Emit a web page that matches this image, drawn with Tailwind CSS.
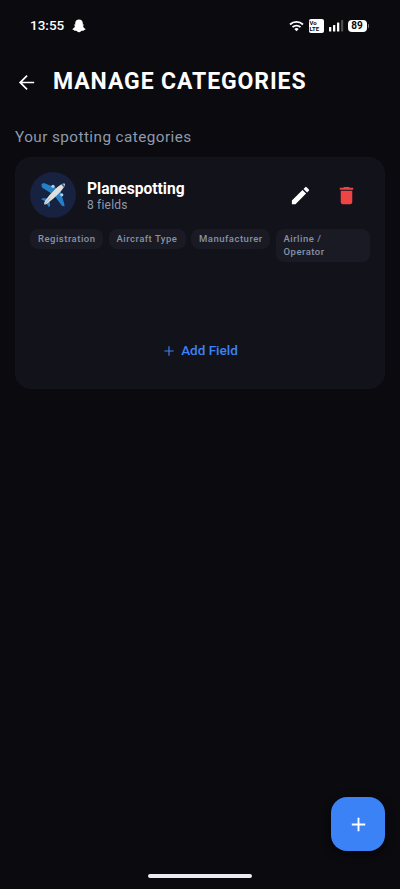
<!DOCTYPE html>
<html lang="en">
<head>
<meta charset="utf-8">
<meta name="viewport" content="width=device-width, initial-scale=1">
<title>Manage Categories</title>
<script src="https://cdn.jsdelivr.net/npm/@tailwindcss/browser@4"></script>
</head>
<body class="bg-[#0a0a0f] font-['Roboto',sans-serif] text-white">
<div class="relative flex h-[889px] w-[400px] flex-col overflow-hidden">
  <!-- Status bar -->
  <header class="flex h-[51px] shrink-0 items-center justify-between pl-[30px] pr-[30px]">
    <div class="flex items-center gap-[8px]">
      <span class="pb-[2px] text-[13.500px] font-medium leading-4">13:55</span>
      <svg class="h-[14px] w-[14px]" viewBox="0 0 14 14" fill="#fff"><path d="M7 .5C4.600.5 3.200 2.200 3.200 4.200v1.500l-1.200-.1c-.3.5.4.9 1 1.200C2.700 8.500 1.600 9.500.400 9.900c.1.800 1 .900 1.700 1.100l.4.900c.9-.1 1.900-.1 2.500.4.600.5 1.200.9 2 .9s1.400-.4 2-.9c.6-.5 1.600-.5 2.500-.4l.4-.9c.7-.2 1.600-.3 1.700-1.100C12.400 9.500 11.300 8.500 11 6.800c.6-.3 1.300-.7 1-1.200l-1.200.1V4.200C10.800 2.200 9.400.5 7 .5z"/></svg>
    </div>
    <div class="flex items-center">
      <svg class="h-[12px] w-[15px]" viewBox="0 0 15 12" fill="none" stroke="#fff" stroke-width="1.800"><path d="M1 4.500a9.200 9.200 0 0 1 13 0M3.500 7.200a5.700 5.700 0 0 1 8 0"/><path d="M5.300 9a3.100 3.100 0 0 1 4.400 0L7.500 11.300z" fill="#fff" stroke="none"/></svg>
      <div class="ml-[4.500px] flex h-[14px] w-[15px] flex-col justify-center rounded-[2px] bg-white pl-[1px] text-[6px] font-bold leading-[6px] text-[#0a0a0f]"><span>Vo</span><span>LTE</span></div>
      <svg class="ml-[5px] h-[12px] w-[15px]" viewBox="0 0 15 12" fill="#fff"><rect x="0" y="7" width="2.300" height="4.500" rx=".5"/><rect x="4" y="5" width="2.300" height="6.500" rx=".5"/><rect x="8" y="2.500" width="2.300" height="9" rx=".5"/><rect x="12" y="0" width="2.200" height="11.500" rx=".5" fill="#4c4c50"/></svg>
      <div class="ml-[4px] flex h-[12px] w-[19px] items-center justify-center rounded-[4px] bg-white text-[10px] font-bold leading-none text-[#0a0a0f]">89</div>
      <div class="ml-[1px] mr-[1px] h-[4px] w-[1.500px] rounded-r bg-[#777]"></div>
    </div>
  </header>

  <!-- Title bar -->
  <div class="flex h-[62px] shrink-0 items-center pl-[15px]">
    <svg class="h-[23px] w-[23px]" viewBox="0 0 24 24" fill="#fff"><path d="M20 11.200H7.500l5.700-5.700L12 4.200l-7.900 7.800 7.900 7.800 1.200-1.300-5.700-5.700H20z"/></svg>
    <h1 class="ml-[15px] whitespace-nowrap text-[23px] font-bold leading-7 tracking-[0.900px]">MANAGE CATEGORIES</h1>
  </div>

  <main class="px-[15px] pt-[14px]">
    <h2 class="text-[15.300px] leading-5 tracking-[0.430px] text-[#8e9aad]">Your spotting categories</h2>
    <section class="mt-[10px] flex h-[232px] flex-col rounded-[16px] border border-[#14141d] bg-[#12121a] px-[14px] pt-[14px]">
      <div class="flex items-center">
        <div class="flex h-[46px] w-[46px] shrink-0 items-center justify-center rounded-full bg-[#172140]">
          <svg class="h-[26px] w-[26px]" viewBox="0 0 27 27">
            <g fill="#2380c5"><path d="M1.500 2.200 4 1l13.200 5.200-5.700 5.500L2 5.600zM25.500 25.500l-2.800-.8-7.200-9.800 5.700-5.600 3.900 13zM1.200 17.800l2-1.100 6 .8-2.800 3zM9.300 26.300l1.300-1.900-.9-5.400-3.200 2.900z"/></g>
            <g fill="#a9cfe9"><circle cx="13.500" cy="4.500" r="1.700"/><circle cx="22.600" cy="13.300" r="1.700"/></g>
            <path d="M4.700 23.300c-.8-.5-.4-2 .7-3.700C9 13.800 17.700 4.800 22.200 2.300c1.600-.9 3.100-1 3.500-.5.500.600.2 2-.7 3.500C22.200 10 13.200 18.500 8 22c-1.600 1.100-2.700 1.600-3.300 1.300z" fill="#dedfdf"/>
            <path d="m21.700 2.700 1.900-.9 2 1.900-.8 2-1.300-1.500z" fill="#49677d"/>
            <path d="m4.900 22.900 5.800-6.500" stroke="#9ba8b2" stroke-width=".8"/>
          </svg>
        </div>
        <div class="ml-[11px] flex-1 pt-[2px]">
          <h3 class="text-[15.600px] font-bold leading-[17px]">Planespotting</h3>
          <p class="text-[12px] leading-[14px] tracking-[0.200px] text-[#8e9aad]">8 fields</p>
        </div>
        <div class="mr-[12px] flex items-center gap-[23px]">
          <svg class="h-[23px] w-[23px]" viewBox="0 0 24 24" fill="#fff"><path d="M3 17.250V21h3.750L17.810 9.940l-3.750-3.750L3 17.250zM20.710 7.040a1 1 0 0 0 0-1.410l-2.340-2.340a1 1 0 0 0-1.410 0l-1.830 1.830 3.750 3.750 1.830-1.830z"/></svg>
          <svg class="h-[23px] w-[23px]" viewBox="0 0 24 24" fill="#ef4444"><path d="M6 19c0 1.100.9 2 2 2h8c1.100 0 2-.9 2-2V7H6v12zM19 4h-3.500l-1-1h-5l-1 1H5v2h14V4z"/></svg>
        </div>
      </div>
      <div class="mt-[11px] flex items-start gap-[5.500px] text-[9.500px] font-medium leading-[13.300px] tracking-[0.500px] text-[#8693a7]">
        <span class="h-[20px] w-[73px] shrink-0 whitespace-nowrap rounded-[8px] bg-[#1a1a24] pl-[8px] pt-[3px]">Registration</span>
        <span class="h-[20px] w-[77px] shrink-0 whitespace-nowrap rounded-[8px] bg-[#1a1a24] pl-[8px] pt-[3px]">Aircraft Type</span>
        <span class="h-[20px] w-[79px] shrink-0 whitespace-nowrap rounded-[8px] bg-[#1a1a24] pl-[8px] pt-[3px]">Manufacturer</span>
        <span class="h-[33px] flex-1 rounded-[8px] bg-[#1a1a24] pl-[8px] pt-[3px]">Airline /<br>Operator</span>
      </div>
      <button class="mt-[79px] flex h-[20px] items-center justify-center text-[#3b82f6]">
        <svg class="h-[14px] w-[14px]" viewBox="0 0 24 24" fill="currentColor"><path d="M20 13h-7v7h-2v-7H4v-2h7V4h2v7h7z"/></svg>
        <span class="ml-[5px] pb-[1px] text-[13.500px] font-medium leading-[19px]">Add Field</span>
      </button>
    </section>
  </main>

  <button aria-label="Add category" class="absolute left-[331px] top-[797px] flex h-[54px] w-[54px] items-center justify-center rounded-[16px] bg-[#3b82f6] shadow-[0_3px_8px_rgba(0,0,0,0.5)]">
    <svg class="h-[23px] w-[23px]" viewBox="0 0 24 24" fill="#fff"><path d="M19 13h-6v6h-2v-6H5v-2h6V5h2v6h6z"/></svg>
  </button>
  <div class="absolute left-[148px] top-[874px] h-[4px] w-[104px] rounded-full bg-[#ececef]"></div>
</div>
</body>
</html>
